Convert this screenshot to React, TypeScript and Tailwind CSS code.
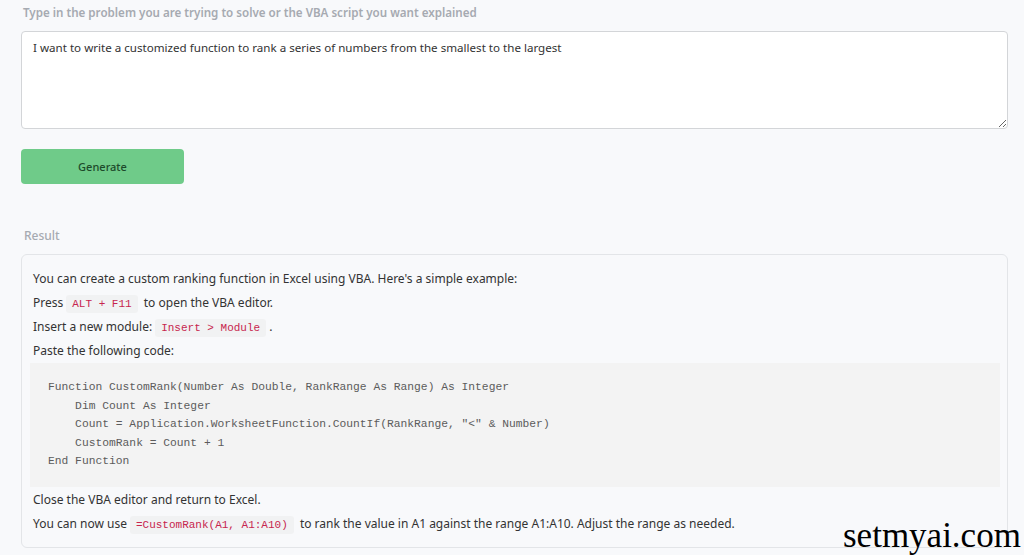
const CODE = [
  "Function CustomRank(Number As Double, RankRange As Range) As Integer",
  "    Dim Count As Integer",
  '    Count = Application.WorksheetFunction.CountIf(RankRange, "<" & Number)',
  "    CustomRank = Count + 1",
  "End Function",
];

function InlineCode({ children }: { children: string }) {
  return (
    <code className="mx-[3px] rounded-[3px] bg-[#f1f2f3] px-[6px] py-[3px] font-['Liberation_Mono',monospace] text-[11px] leading-none text-[#c7254e]">
      {children}
    </code>
  );
}

export default function App() {
  return (
    <div className="relative min-h-[555px] bg-[#f8f9fb] pl-[21px] pr-[16px] pt-[4px] font-['Noto_Sans',sans-serif] text-[12px] text-[#333]">
      {/* Prompt */}
      <label className="mb-[9px] block pl-[2px] text-[11.6px] font-semibold leading-[18px] text-[#a6aab1]">
        Type in the problem you are trying to solve or the VBA script you want explained
      </label>
      <textarea
        className="block h-[98px] w-[987px] rounded-[4px] border border-[#d3d5d8] bg-white px-[11px] pt-[7px] text-[11.6px] leading-[18px] text-[#333] outline-none"
        defaultValue="I want to write a customized function to rank a series of numbers from the smallest to the largest"
      />

      <button className="mt-[20px] h-[35px] w-[163px] rounded-[4px] bg-[#6fcb89] pt-[2px] text-[11px] font-medium text-[#1d4a2b]">
        Generate
      </button>

      {/* Result */}
      <div className="mb-[9px] mt-[42px] pl-[3px] pt-px text-[12px] font-medium leading-[18px] text-[#a6aab1]">Result</div>
      <div className="h-[294px] w-[987px] rounded-[6px] border border-[#e3e5e8] bg-[#f8f9fb] px-[8px] pt-[12px] leading-[24px]">
        <p className="h-[24px] pl-[3px]">You can create a custom ranking function in Excel using VBA. Here's a simple example:</p>
        <p className="h-[24px] pl-[3px]">
          Press<InlineCode>ALT + F11</InlineCode> to open the VBA editor.
        </p>
        <p className="h-[24px] pl-[3px]">
          Insert a new module:<InlineCode>Insert &gt; Module</InlineCode>.
        </p>
        <p className="h-[24px] pl-[3px]">Paste the following code:</p>
        <pre className="w-[970px] bg-[#f3f3f3] pb-[16px] pl-[18px] pt-[15px] font-['Liberation_Mono',monospace] text-[11.3px] leading-[18.5px] text-[#5c5c5c]">
          {CODE.join("\n")}
        </pre>
        <p className="h-[24px] pl-[3px] pt-px">Close the VBA editor and return to Excel.</p>
        <p className="h-[24px] pl-[3px] pt-px">
          You can now use<InlineCode>=CustomRank(A1, A1:A10)</InlineCode> to rank the value in A1 against the range A1:A10. Adjust the range as needed.
        </p>
      </div>

      {/* watermark */}
      <div className="absolute left-[843px] top-[516px] font-['Liberation_Serif',serif] text-[35px] leading-[40px] text-black">
        setmyai.com
      </div>
    </div>
  );
}
